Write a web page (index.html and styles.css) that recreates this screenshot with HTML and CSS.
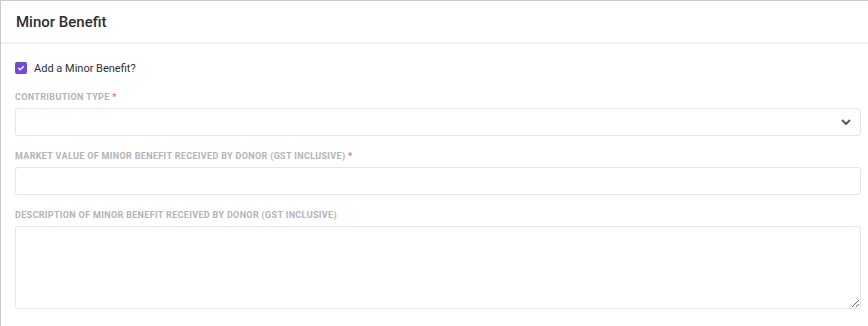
FILE: index.html
```html
<!DOCTYPE html>
<html lang="en">

<head>
    <meta charset="UTF-8">
    <meta name="viewport" content="width=device-width, initial-scale=1.0">
    <title>Minor Benefit</title>
    <link rel="stylesheet" href="styles.css">
</head>

<body>
    <div class="card">
        <div class="card-header">Minor Benefit</div>

        <div class="card-body">
            <label class="check-row">
                <span class="check-box">
                    <svg width="8" height="8" viewBox="0 0 8 8"><path d="M1.5 4.2 L3.2 5.8 L6.5 2.4" fill="none" stroke="#fff" stroke-width="1.4" stroke-linecap="round" stroke-linejoin="round"/></svg>
                </span>
                <span class="check-text">Add a Minor Benefit?</span>
            </label>

            <div class="field">
                <div class="field-label">Contribution Type <span class="req">*</span></div>
                <div class="select-wrap">
                    <select class="input">
                        <option></option>
                    </select>
                    <svg class="chevron" width="10" height="7" viewBox="0 0 10 7"><path d="M1.5 1.5 L5 5 L8.5 1.5" fill="none" stroke="#555" stroke-width="1.8" stroke-linecap="round" stroke-linejoin="round"/></svg>
                </div>
            </div>

            <div class="field">
                <div class="field-label">Market value of minor benefit received by donor (GST inclusive) <span class="req">*</span></div>
                <input class="input" type="text">
            </div>

            <div class="field">
                <div class="field-label">Description of minor benefit received by donor (GST inclusive)</div>
                <textarea class="input textarea"></textarea>
            </div>
        </div>
    </div>
</body>

</html>
```

FILE: styles.css
```css
* {
    margin: 0;
    padding: 0;
    box-sizing: border-box;
}

body {
    background-color: #fff;
    font-family: Roboto, "Liberation Sans", sans-serif;
    color: #333;
}

.card {
    border-top: 1px solid #c9c9c9;
    border-left: 1px solid #c9c9c9;
    height: 326px;
}

.card-header {
    height: 43px;
    display: flex;
    align-items: center;
    padding: 1px 15px 0;
    font-size: 15px;
    font-weight: 500;
    color: #2f2f33;
    border-bottom: 2px solid #f1f1f4;
}

.card-body {
    padding: 18px 7px 0 14px;
}

.check-row {
    display: flex;
    align-items: center;
    gap: 7px;
    height: 12px;
    margin-bottom: 17px;
}

.check-box {
    width: 12px;
    height: 12px;
    border-radius: 2px;
    background-color: #7446d9;
    display: flex;
    justify-content: center;
    align-items: center;
}

.check-text {
    font-size: 11px;
    color: #2f2f33;
}

.field {
    margin-bottom: 14px;
}

.field-label {
    font-size: 9px;
    font-weight: 700;
    line-height: 12px;
    text-transform: uppercase;
    color: #b3b3b8;
    letter-spacing: 0.34px;
    margin-bottom: 5px;
}

.req {
    color: #e86a6a;
}

.input {
    display: block;
    width: 100%;
    height: 28px;
    border: 1px solid #e5e5ec;
    border-radius: 3px;
    background-color: #fff;
    font-family: inherit;
    font-size: 12px;
    outline: none;
    padding: 0 8px;
}

.select-wrap {
    position: relative;
}

.select-wrap select {
    appearance: none;
    -webkit-appearance: none;
}

.chevron {
    position: absolute;
    right: 10px;
    top: 11px;
}

.textarea {
    height: 83px;
    resize: both;
    padding: 6px 8px;
}
```
